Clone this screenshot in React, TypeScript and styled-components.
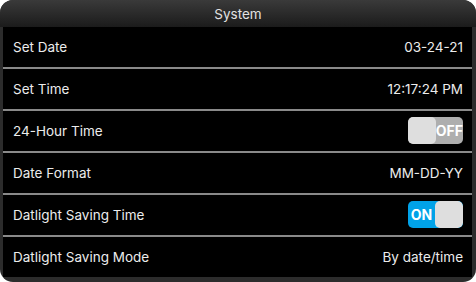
import React from "react";
import styled, { createGlobalStyle } from "styled-components";

const Global = createGlobalStyle`
  html, body { margin: 0; padding: 0; background: #ffffff; }
  * { box-sizing: border-box; }
`;

const Panel = styled.div`
  width: 476px;
  height: 282px;
  background: #2c2c2c;
  border-radius: 13px;
  padding: 0 4px 5px 3px;
  display: flex;
  flex-direction: column;
  overflow: hidden;
  font-family: Inter, "Noto Sans", sans-serif;
  color: #ececec;
`;

const Header = styled.div`
  height: 27px;
  margin: 0 -4px 0 -3px;
  background: linear-gradient(#3a3a3a, #1b1b1b);
  display: flex;
  align-items: center;
  justify-content: center;
  font-size: 13.5px;
  color: #e2e2e2;
  flex: none;
`;

const List = styled.div`
  flex: 1;
  display: flex;
  flex-direction: column;
  background: #000;
`;

const Row = styled.div<{ $last?: boolean }>`
  flex: ${(p) => (p.$last ? "1" : "none")};
  height: ${(p) => (p.$last ? "auto" : "42px")};
  display: flex;
  align-items: center;
  justify-content: space-between;
  padding: 0 9px 1px 10px;
  border-bottom: ${(p) => (p.$last ? "none" : "2px solid #8a8a8a")};
  font-size: 13.5px;
`;

const Value = styled.span`
  color: #ececec;
`;

const Toggle = styled.div<{ $on: boolean }>`
  width: 55px;
  height: 27px;
  border-radius: 5px;
  background: ${(p) => (p.$on ? "#00a2e8" : "#aeaeae")};
  display: flex;
  flex-direction: ${(p) => (p.$on ? "row-reverse" : "row")};
  align-items: stretch;
  overflow: hidden;
`;

const Knob = styled.div`
  width: 28px;
  background: #dedede;
  border-radius: 5px;
`;

const ToggleText = styled.span`
  flex: 1;
  display: flex;
  align-items: center;
  justify-content: center;
  font-weight: 700;
  font-size: 14px;
  color: #ffffff;
`;

const Switch = ({ on }: { on: boolean }) => (
  <Toggle $on={on}>
    <Knob />
    <ToggleText>{on ? "ON" : "OFF"}</ToggleText>
  </Toggle>
);

export default function App() {
  return (
    <>
      <Global />
      <Panel>
        <Header>System</Header>
        <List>
          <Row>
            <span>Set Date</span>
            <Value>03-24-21</Value>
          </Row>
          <Row>
            <span>Set Time</span>
            <Value>12:17:24 PM</Value>
          </Row>
          <Row>
            <span>24-Hour Time</span>
            <Switch on={false} />
          </Row>
          <Row>
            <span>Date Format</span>
            <Value>MM-DD-YY</Value>
          </Row>
          <Row>
            <span>Datlight Saving Time</span>
            <Switch on={true} />
          </Row>
          <Row $last>
            <span>Datlight Saving Mode</span>
            <Value>By date/time</Value>
          </Row>
        </List>
      </Panel>
    </>
  );
}
